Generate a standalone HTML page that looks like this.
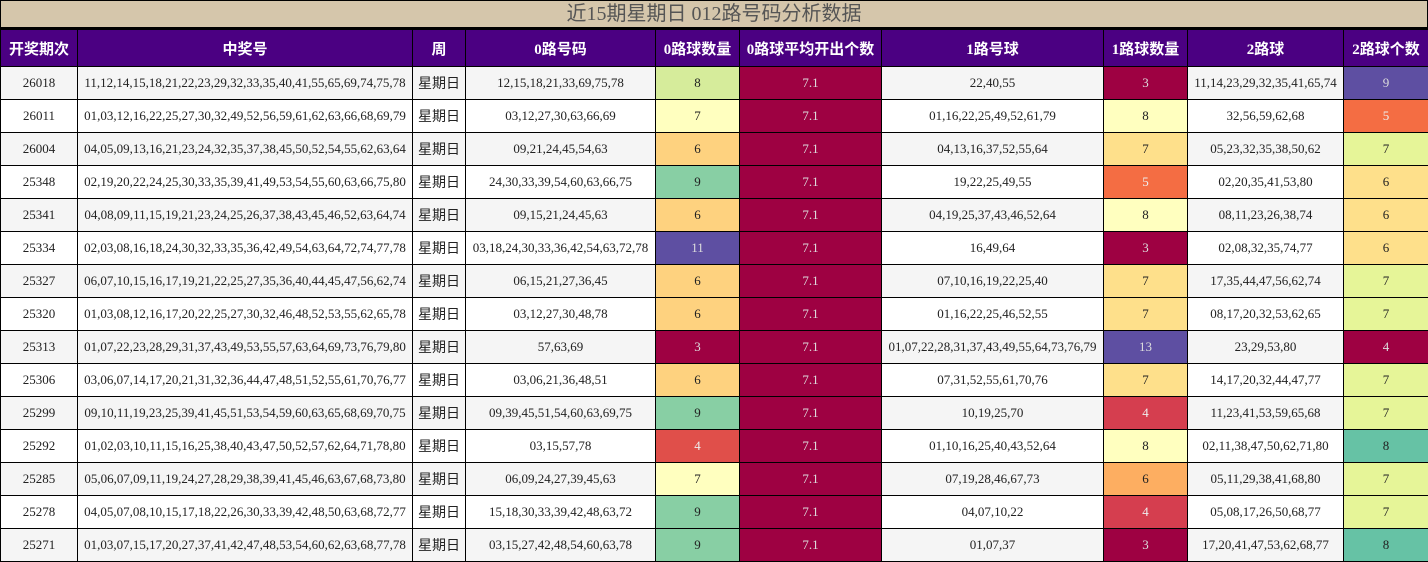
<!DOCTYPE html>
<html><head><meta charset="utf-8"><style>
body{margin:0;width:1428px;height:562px;overflow:hidden;background:#fff;font-family:"Liberation Serif","Noto Sans CJK SC",serif}
.t{background:#d5c6ab;border:1px solid #000;border-bottom:2px solid #000;box-sizing:border-box;height:29px;text-align:center;font-size:20px;line-height:27px;color:#555}
table{border-collapse:collapse;table-layout:fixed;width:1428px}
td,th{border:1px solid #000;text-align:center;padding:0;font-size:13px;color:#222;overflow:hidden;white-space:nowrap}
th{background:#4b0082;color:#fff;font-size:15px;font-weight:bold;height:36px}
td{height:32px}
tr:nth-child(even) td{background:#f5f5f5}
tr:nth-child(odd) td{background:#fff}
td.w{font-family:"Noto Sans CJK SC",sans-serif;font-size:14px;color:#222}
td.a{background:#9e0142!important;color:#ddd}
.c3{background:#9e0142!important;color:#ddd}.c4{background:#d53e4f!important;color:#eee}.c4b{background:#e04f4a!important;color:#eee}
.c5{background:#f46d43!important;color:#eee}.c6{background:#fed27f!important}.c6b{background:#fdae61!important}
.c7{background:#ffffbf!important}.c7b{background:#fee08b!important}.c7c{background:#e6f598!important}
.c8{background:#d6ec9b!important}.c8b{background:#ffffbf!important}.c8c{background:#66c2a5!important}
.c9{background:#88cfa4!important}.c11{background:#5e4fa2!important;color:#ddd}
.c6c{background:#fee08b!important}
</style></head><body>
<div class="t">近15期星期日 012路号码分析数据</div>
<table>
<colgroup><col style="width:77px"><col style="width:335px"><col style="width:53px"><col style="width:190px"><col style="width:84px"><col style="width:142px"><col style="width:222px"><col style="width:84px"><col style="width:156px"><col style="width:85px"></colgroup>
<tr><th>开奖期次</th><th>中奖号</th><th>周</th><th>0路号码</th><th>0路球数量</th><th>0路球平均开出个数</th><th>1路号球</th><th>1路球数量</th><th>2路球</th><th>2路球个数</th></tr>
<tr><td>26018</td><td>11,12,14,15,18,21,22,23,29,32,33,35,40,41,55,65,69,74,75,78</td><td class="w">星期日</td><td>12,15,18,21,33,69,75,78</td><td class="c8">8</td><td class="a">7.1</td><td>22,40,55</td><td class="c3">3</td><td>11,14,23,29,32,35,41,65,74</td><td class="c11">9</td></tr>
<tr><td>26011</td><td>01,03,12,16,22,25,27,30,32,49,52,56,59,61,62,63,66,68,69,79</td><td class="w">星期日</td><td>03,12,27,30,63,66,69</td><td class="c7">7</td><td class="a">7.1</td><td>01,16,22,25,49,52,61,79</td><td class="c8b">8</td><td>32,56,59,62,68</td><td class="c5">5</td></tr>
<tr><td>26004</td><td>04,05,09,13,16,21,23,24,32,35,37,38,45,50,52,54,55,62,63,64</td><td class="w">星期日</td><td>09,21,24,45,54,63</td><td class="c6">6</td><td class="a">7.1</td><td>04,13,16,37,52,55,64</td><td class="c7b">7</td><td>05,23,32,35,38,50,62</td><td class="c7c">7</td></tr>
<tr><td>25348</td><td>02,19,20,22,24,25,30,33,35,39,41,49,53,54,55,60,63,66,75,80</td><td class="w">星期日</td><td>24,30,33,39,54,60,63,66,75</td><td class="c9">9</td><td class="a">7.1</td><td>19,22,25,49,55</td><td class="c5">5</td><td>02,20,35,41,53,80</td><td class="c6c">6</td></tr>
<tr><td>25341</td><td>04,08,09,11,15,19,21,23,24,25,26,37,38,43,45,46,52,63,64,74</td><td class="w">星期日</td><td>09,15,21,24,45,63</td><td class="c6">6</td><td class="a">7.1</td><td>04,19,25,37,43,46,52,64</td><td class="c8b">8</td><td>08,11,23,26,38,74</td><td class="c6c">6</td></tr>
<tr><td>25334</td><td>02,03,08,16,18,24,30,32,33,35,36,42,49,54,63,64,72,74,77,78</td><td class="w">星期日</td><td>03,18,24,30,33,36,42,54,63,72,78</td><td class="c11">11</td><td class="a">7.1</td><td>16,49,64</td><td class="c3">3</td><td>02,08,32,35,74,77</td><td class="c6c">6</td></tr>
<tr><td>25327</td><td>06,07,10,15,16,17,19,21,22,25,27,35,36,40,44,45,47,56,62,74</td><td class="w">星期日</td><td>06,15,21,27,36,45</td><td class="c6">6</td><td class="a">7.1</td><td>07,10,16,19,22,25,40</td><td class="c7b">7</td><td>17,35,44,47,56,62,74</td><td class="c7c">7</td></tr>
<tr><td>25320</td><td>01,03,08,12,16,17,20,22,25,27,30,32,46,48,52,53,55,62,65,78</td><td class="w">星期日</td><td>03,12,27,30,48,78</td><td class="c6">6</td><td class="a">7.1</td><td>01,16,22,25,46,52,55</td><td class="c7b">7</td><td>08,17,20,32,53,62,65</td><td class="c7c">7</td></tr>
<tr><td>25313</td><td>01,07,22,23,28,29,31,37,43,49,53,55,57,63,64,69,73,76,79,80</td><td class="w">星期日</td><td>57,63,69</td><td class="c3">3</td><td class="a">7.1</td><td>01,07,22,28,31,37,43,49,55,64,73,76,79</td><td class="c11">13</td><td>23,29,53,80</td><td class="c3">4</td></tr>
<tr><td>25306</td><td>03,06,07,14,17,20,21,31,32,36,44,47,48,51,52,55,61,70,76,77</td><td class="w">星期日</td><td>03,06,21,36,48,51</td><td class="c6">6</td><td class="a">7.1</td><td>07,31,52,55,61,70,76</td><td class="c7b">7</td><td>14,17,20,32,44,47,77</td><td class="c7c">7</td></tr>
<tr><td>25299</td><td>09,10,11,19,23,25,39,41,45,51,53,54,59,60,63,65,68,69,70,75</td><td class="w">星期日</td><td>09,39,45,51,54,60,63,69,75</td><td class="c9">9</td><td class="a">7.1</td><td>10,19,25,70</td><td class="c4">4</td><td>11,23,41,53,59,65,68</td><td class="c7c">7</td></tr>
<tr><td>25292</td><td>01,02,03,10,11,15,16,25,38,40,43,47,50,52,57,62,64,71,78,80</td><td class="w">星期日</td><td>03,15,57,78</td><td class="c4b">4</td><td class="a">7.1</td><td>01,10,16,25,40,43,52,64</td><td class="c8b">8</td><td>02,11,38,47,50,62,71,80</td><td class="c8c">8</td></tr>
<tr><td>25285</td><td>05,06,07,09,11,19,24,27,28,29,38,39,41,45,46,63,67,68,73,80</td><td class="w">星期日</td><td>06,09,24,27,39,45,63</td><td class="c7">7</td><td class="a">7.1</td><td>07,19,28,46,67,73</td><td class="c6b">6</td><td>05,11,29,38,41,68,80</td><td class="c7c">7</td></tr>
<tr><td>25278</td><td>04,05,07,08,10,15,17,18,22,26,30,33,39,42,48,50,63,68,72,77</td><td class="w">星期日</td><td>15,18,30,33,39,42,48,63,72</td><td class="c9">9</td><td class="a">7.1</td><td>04,07,10,22</td><td class="c4">4</td><td>05,08,17,26,50,68,77</td><td class="c7c">7</td></tr>
<tr><td>25271</td><td>01,03,07,15,17,20,27,37,41,42,47,48,53,54,60,62,63,68,77,78</td><td class="w">星期日</td><td>03,15,27,42,48,54,60,63,78</td><td class="c9">9</td><td class="a">7.1</td><td>01,07,37</td><td class="c3">3</td><td>17,20,41,47,53,62,68,77</td><td class="c8c">8</td></tr>
</table>
</body></html>
